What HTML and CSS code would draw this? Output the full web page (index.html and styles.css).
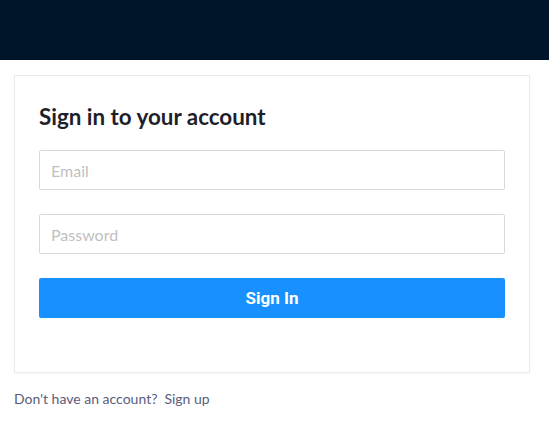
FILE: index.html
```html
<!DOCTYPE html>
<html lang="en">
<head>
<meta charset="utf-8">
<title>Sign in</title>
<link rel="stylesheet" href="styles.css">
</head>
<body>
<header class="topbar"></header>
<main class="page">
  <section class="card">
    <h1 class="title">Sign in to your account</h1>
    <form class="form">
      <input class="field" type="email" placeholder="Email">
      <input class="field" type="password" placeholder="Password">
      <button class="submit" type="button">Sign In</button>
    </form>
  </section>
  <p class="footer">Don't have an account?<a class="link" href="#">Sign up</a></p>
</main>
</body>
</html>
```

FILE: styles.css
```css
* { box-sizing: border-box; }
body {
  margin: 0;
  background: #ffffff;
  font-family: "Lato", "Open Sans", sans-serif;
}
.topbar {
  height: 60px;
  background: #001529;
}
.page {
  padding: 15px 19px 0 14px;
}
.card {
  border: 1px solid #ececec;
  box-shadow: 0 1px 3px rgba(0, 0, 0, 0.04);
  padding: 29px 24px 54px 24px;
  background: #fff;
}
.title {
  margin: 0 0 21px 0;
  font-family: "Lato", sans-serif;
  font-weight: 700;
  font-size: 22.4px;
  line-height: 24px;
  color: #1f1f2b;
}
.form {
  display: flex;
  flex-direction: column;
  gap: 24px;
}
.field {
  height: 40px;
  border: 1px solid #d9d9d9;
  border-radius: 2px;
  padding: 0 11px;
  font-family: "Lato", sans-serif;
  font-size: 16px;
  color: #333;
  outline: none;
}
.field::placeholder { color: #bfbfbf; }
.submit {
  height: 40px;
  border: 0;
  border-radius: 2px;
  background: #1890ff;
  color: #fff;
  font-family: "Roboto", sans-serif;
  font-weight: 700;
  font-size: 17px;
  cursor: pointer;
}
.footer {
  margin: 17px 0 0 0;
  font-family: "Lato", sans-serif;
  font-size: 14px;
  color: #5b5b7b;
}
.link {
  margin-left: 7px;
  color: #5b5b7b;
  text-decoration: none;
}
```
